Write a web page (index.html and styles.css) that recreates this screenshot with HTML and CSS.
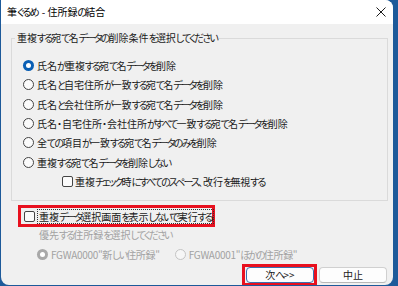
FILE: index.html
```html
<!DOCTYPE html>
<html lang="ja">
<head>
<meta charset="utf-8">
<link rel="stylesheet" href="styles.css">
</head>
<body>
<div class="window">
  <div class="titlebar">
    <span class="title">筆<span class="k">ぐる</span>め - 住所録<span class="k">の</span>結合</span>
    <svg class="close" width="10" height="10" viewBox="0 0 10 10"><path d="M0.5 0.5 L9.5 9.5 M9.5 0.5 L0.5 9.5" stroke="#1a1a1a" stroke-width="1"/></svg>
  </div>
  <div class="content">
    <fieldset class="group">
      <legend>重複<span class="k">する</span>宛<span class="k">て</span>名<span class="k">データの</span>削除条件<span class="k">を</span>選択<span class="k">してください</span></legend>
      <div class="rows">
        <div class="row"><span class="radio on"></span><span>氏名<span class="k">が</span>重複<span class="k">する</span>宛<span class="k">て</span>名<span class="k">データを</span>削除</span></div>
        <div class="row"><span class="radio"></span><span>氏名<span class="k">と</span>自宅住所<span class="k">が</span>一致<span class="k">する</span>宛<span class="k">て</span>名<span class="k">データを</span>削除</span></div>
        <div class="row"><span class="radio"></span><span>氏名<span class="k">と</span>会社住所<span class="k">が</span>一致<span class="k">する</span>宛<span class="k">て</span>名<span class="k">データを</span>削除</span></div>
        <div class="row"><span class="radio"></span><span>氏名・自宅住所・会社住所<span class="k">がすべて</span>一致<span class="k">する</span>宛<span class="k">て</span>名<span class="k">データを</span>削除</span></div>
        <div class="row"><span class="radio"></span><span>全<span class="k">ての</span>項目<span class="k">が</span>一致<span class="k">する</span>宛<span class="k">て</span>名<span class="k">データのみを</span>削除</span></div>
        <div class="row"><span class="radio"></span><span>重複<span class="k">する</span>宛<span class="k">て</span>名<span class="k">データを</span>削除<span class="k">しない</span></span></div>
        <div class="row sub"><span class="check"></span><span>重複<span class="k">チェック</span>時<span class="k">にすべてのスペース</span>、改行<span class="k">を</span>無視<span class="k">する</span></span></div>
      </div>
    </fieldset>
    <div class="highlight">
      <div class="row"><span class="check"></span><span class="focus">重複<span class="k">データ</span>選択画面<span class="k">を</span>表示<span class="k">しないで</span>実行<span class="k">する</span></span></div>
    </div>
    <div class="disabled-label">優先<span class="k">する</span>住所録<span class="k">を</span>選択<span class="k">してください</span></div>
    <div class="disabled-row">
      <div class="row"><span class="radio dis on"></span><span>FGWA0000"新<span class="k">しい</span>住所録"</span></div>
      <div class="row second"><span class="radio dis"></span><span>FGWA0001"<span class="k">ほかの</span>住所録"</span></div>
    </div>
    <div class="buttons">
      <div class="btn-hl"><div class="btn default">次<span class="k">へ</span>&gt;&gt;</div></div>
      <div class="btn">中止</div>
    </div>
  </div>
</div>
</body>
</html>
```
FILE: styles.css
```css
* { box-sizing: border-box; }
html, body { margin: 0; padding: 0; }
body {
  width: 398px;
  height: 286px;
  overflow: hidden;
  background: #1d5a9a;
  font-family: "Noto Sans CJK JP", "Noto Sans", sans-serif;
  font-size: 10px;
  letter-spacing: 0;
  font-feature-settings: "palt";
  color: #1a1a1a;
}
.k { letter-spacing: -1.9px; }
.window {
  margin-left: 1px;
  width: 392px;
  height: 285px;
  background: #f0f0f0;
  border-radius: 0 8px 8px 8px;
  overflow: hidden;
}
.titlebar {
  height: 24px;
  background: #ffffff;
  display: flex;
  align-items: center;
  justify-content: space-between;
  padding: 0 7px 0 6px;
}
.title { color: #000; line-height: 14px; }
.close { display: block; }
.content { padding-top: 6px; }
.group {
  margin: 0 5px 0 10px;
  padding: 0;
  border: 1px solid #dadada;
  min-width: 0;
}
.group legend {
  margin-left: 3px;
  padding: 0 2px;
  line-height: 16px;
}
.rows { padding: 10px 0 9px 11px; }
.row {
  display: flex;
  align-items: center;
  height: 19.3px;
  white-space: nowrap;
}
.radio {
  width: 11px;
  height: 11px;
  border-radius: 50%;
  border: 1px solid #444;
  background: #fbfbfb;
  margin-right: 3px;
  flex: none;
  position: relative;
}
.radio.on {
  border: none;
  background: #0a5fb4;
}
.radio.on::after {
  content: "";
  position: absolute;
  left: 3px; top: 3px;
  width: 5px; height: 5px;
  border-radius: 50%;
  background: #fff;
}
.radio.dis { border-color: #c4c4c4; background: #f6f6f6; }
.radio.dis.on { background: #a8a8a8; border: none; }
.check {
  width: 11px;
  height: 11px;
  border: 1px solid #444;
  border-radius: 2px;
  background: #fbfbfb;
  margin-right: 2px;
  flex: none;
}
.row.sub { margin-left: 39px; }
.highlight {
  margin: 4px 0 0 17px;
  width: 197px;
  height: 22px;
  border: 3px solid #e8101e;
  padding-left: 3px;
}
.highlight .row { height: 16px; }
.focus {
  border: 1px dotted #333;
  line-height: 13px;
  padding: 0 1px;
}
.disabled-label {
  margin: 1px 0 0 38px;
  line-height: 14px;
  color: #a2a2a2;
}
.disabled-row {
  display: flex;
  margin: 3px 0 0 36px;
  color: #a2a2a2;
  height: 18px;
  letter-spacing: -0.3px;
}
.disabled-row .row { height: 18px; }
.disabled-row .second { margin-left: 15px; }
.buttons {
  display: flex;
  justify-content: flex-end;
  align-items: flex-start;
  gap: 2px;
  margin: 1px 6px 0 0;
}
.btn-hl {
  border: 3px solid #e8101e;
  padding-left: 1px;
  height: 22px;
}
.btn {
  width: 68px;
  height: 16px;
  background: #fdfdfd;
  border: 1px solid #d0d0d0;
  border-bottom-color: #b8b8b8;
  border-radius: 4px;
  text-align: center;
  line-height: 14px;
}
.buttons > .btn { margin-top: 3px; }
.btn.default { border-color: #3a6fae; }
```
